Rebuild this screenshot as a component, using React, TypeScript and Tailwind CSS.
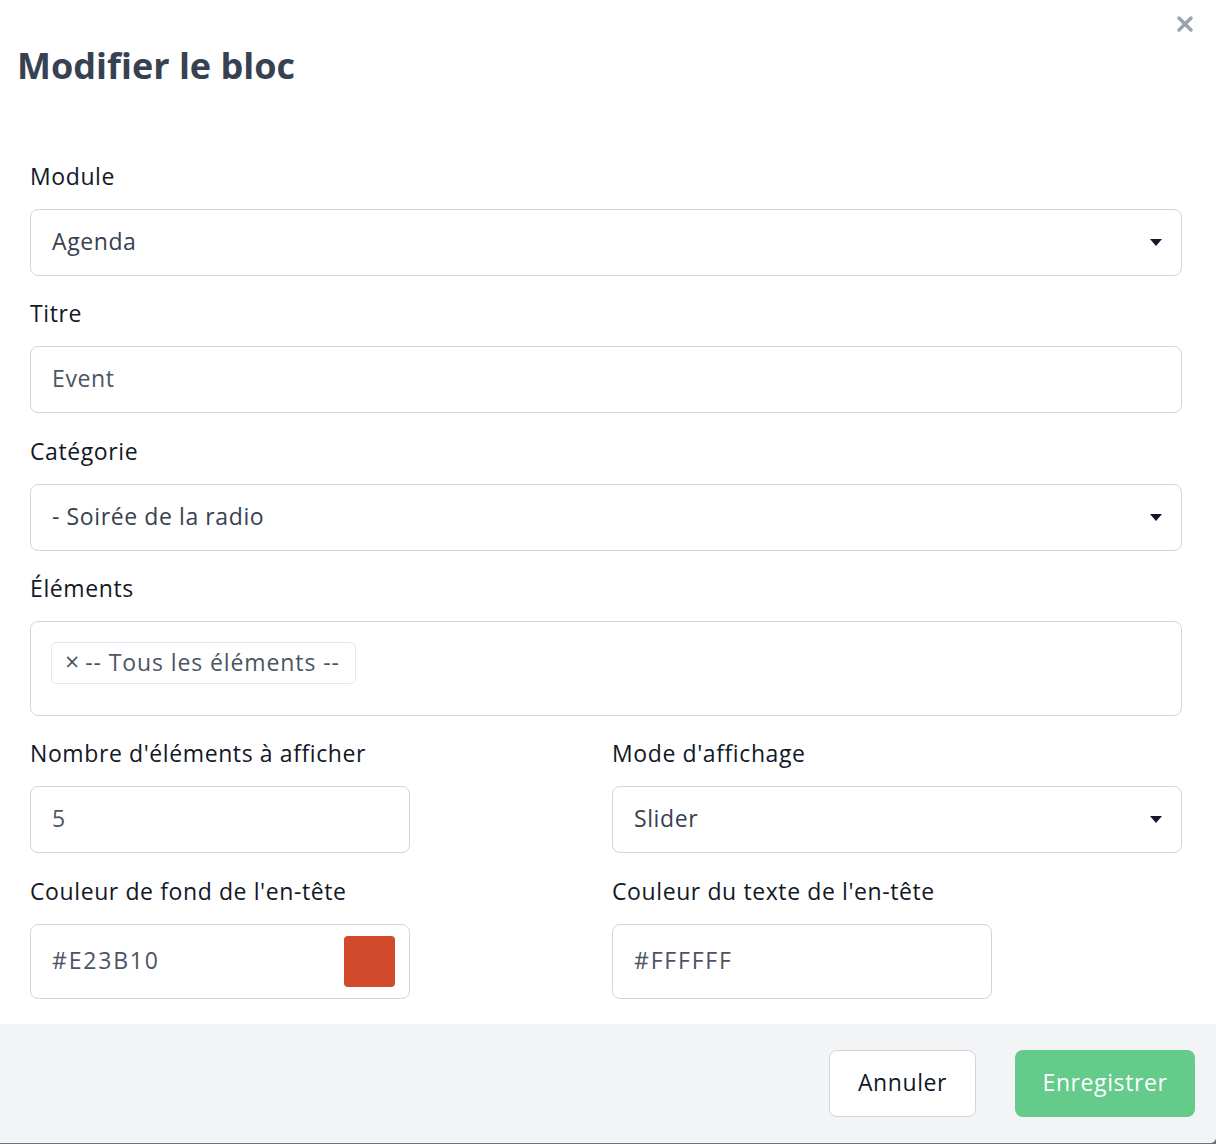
import { X } from "lucide-react";

const font = { fontFamily: "'Open Sans', Lato, sans-serif" };

function Caret() {
  return (
    <svg width="12" height="7" viewBox="0 0 12 7" className="shrink-0">
      <path d="M0 0h12L6 7z" fill="#111827" />
    </svg>
  );
}

function Label({ children }: { children: React.ReactNode }) {
  return <div className="text-[23px] leading-[32px] tracking-[0.6px] text-[#111827] mb-[17px]">{children}</div>;
}

function Select({ value }: { value: string }) {
  return (
    <div className="h-[67px] border border-[#d1d5db] rounded-[8px] flex items-center justify-between pl-[21px] pr-[19px]">
      <span className="text-[23px] tracking-[0.6px] text-[#374151] pb-[3px]">{value}</span>
      <Caret />
    </div>
  );
}

function TextInput({ value, className = "" }: { value: string; className?: string }) {
  return (
    <div className={`h-[67px] border border-[#d1d5db] rounded-[8px] flex items-center pl-[21px] ${className}`}>
      <span className="text-[23px] tracking-[0.6px] text-[#4b5563] pb-[2px]">{value}</span>
    </div>
  );
}

function ColorInput({ value, swatch }: { value: string; swatch: string }) {
  return (
    <div className="w-[380px] h-[75px] border border-[#d1d5db] rounded-[8px] flex items-center justify-between pl-[21px] pr-[14px]">
      <span className="text-[23px] tracking-[1.8px] text-[#4b5563] pb-[3px]">{value}</span>
      <div className="w-[51px] h-[51px] rounded-[4px]" style={{ backgroundColor: swatch }} />
    </div>
  );
}

export default function App() {
  return (
    <div style={font} className="w-[1216px] h-[1144px] bg-[#6b7280]">
      <div className="h-[1143px] bg-white rounded-br-[6px] flex flex-col overflow-hidden">
        <div className="relative h-[160px]">
          <h1 className="pl-[17px] pt-[43px] text-[36px] leading-[46px] font-bold text-[#374151]">Modifier le bloc</h1>
          <button className="absolute top-[12px] right-[19px] text-[#9ca3af]">
            <X size={24} strokeWidth={3.5} />
          </button>
        </div>

        <div className="pl-[30px] pr-[34px] flex-1">
          <Label>Module</Label>
          <Select value="Agenda" />

          <div className="mt-[21px]">
            <Label>Titre</Label>
            <TextInput value="Event" />
          </div>

          <div className="mt-[22px]">
            <Label>Catégorie</Label>
            <Select value="- Soirée de la radio" />
          </div>

          <div className="mt-[21px]">
            <Label>Éléments</Label>
            <div className="h-[95px] border border-[#d1d5db] rounded-[8px] pl-[20px] pt-[20px]">
              <span className="inline-flex items-center h-[42px] pl-[13px] pr-[15px] pb-[2px] border border-[#e5e7eb] rounded-[5px] text-[23px] tracking-[0.9px] text-[#4b5563]">
                <span className="text-[25px] mr-[5px]">×</span>-- Tous les éléments --
              </span>
            </div>
          </div>

          <div className="mt-[21px] grid grid-cols-2 gap-x-[12px]">
            <div>
              <Label>Nombre d'éléments à afficher</Label>
              <TextInput value="5" className="w-[380px]" />
            </div>
            <div>
              <Label>Mode d'affichage</Label>
              <Select value="Slider" />
            </div>
            <div className="mt-[22px]">
              <Label>Couleur de fond de l'en-tête</Label>
              <ColorInput value="#E23B10" swatch="#d04a2b" />
            </div>
            <div className="mt-[22px]">
              <Label>Couleur du texte de l'en-tête</Label>
              <ColorInput value="#FFFFFF" swatch="#ffffff" />
            </div>
          </div>
        </div>

        <div className="h-[119px] bg-[#f3f4f6] flex items-center justify-end gap-[39px] pr-[21px]">
          <button className="h-[67px] w-[147px] bg-white border border-[#d1d5db] rounded-[8px] text-[23px] tracking-[0.6px] text-[#111827] pb-[2px]">
            Annuler
          </button>
          <button className="h-[67px] w-[180px] bg-[#64cb8b] rounded-[8px] text-[23px] tracking-[0.6px] text-white pb-[2px]">
            Enregistrer
          </button>
        </div>
      </div>
    </div>
  );
}
